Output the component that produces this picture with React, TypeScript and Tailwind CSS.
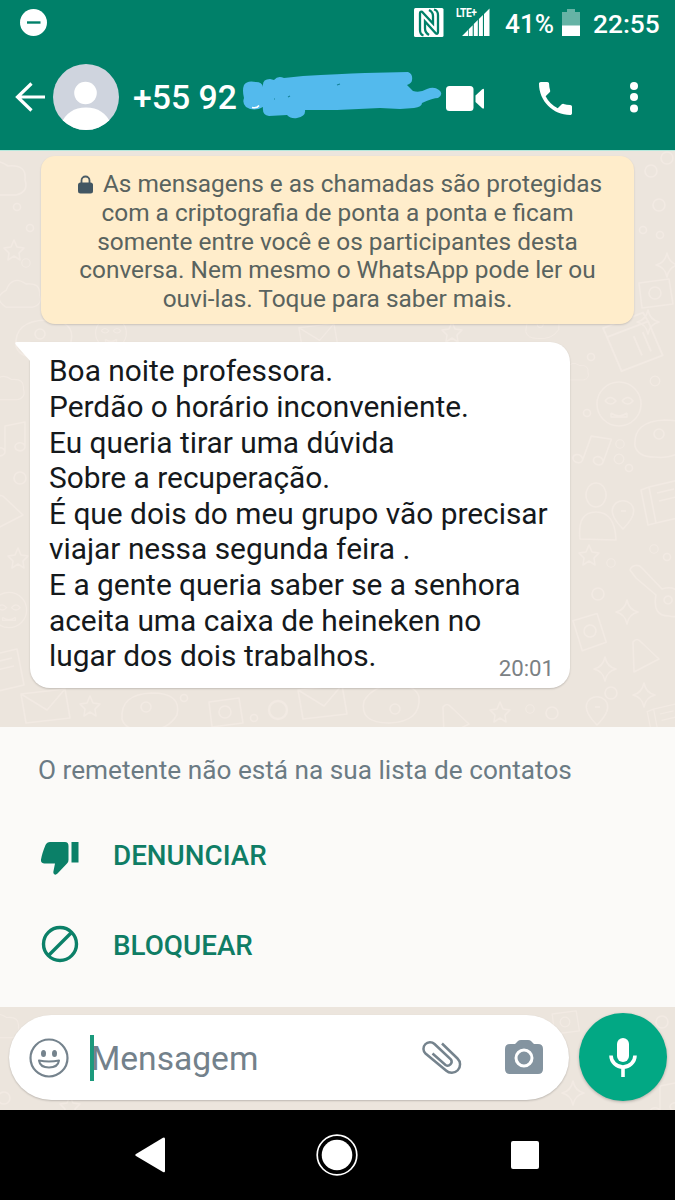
import React from 'react';

interface Doodle {
  shape: keyof typeof shapes;
  x: number;
  y: number;
  scale?: number;
  rotate?: number;
}

// Line drawings for the chat wallpaper, each centred on 0,0
const shapes = {
  dot: <circle r="3.5" />,
  ring: <circle r="6" />,
  face: (
    <>
      <circle r="22" />
      <path d="M-14 -3q5 -7 11 0q-5 6 -11 0M3 -3q6 -7 11 0q-5 6 -11 0M-8 9q8 6 16 0M-8 9v4h16v-4" />
    </>
  ),
  star: <path d="M0 -10l3 7l7 1l-5 5l1 7l-6 -4l-6 4l1 -7l-5 -5l7 -1z" />,
  spark: <path d="M0 -12q2 10 11 12q-9 2 -11 12q-2 -10 -11 -12q9 -2 11 -12z" />,
  book: <path d="M-18 -16l30 -7l7 36l-30 7zM-18 -16l-8 3l7 35l8 -2M-10 -10l17 -4M-8 -2l17 -4" />,
  mail: <path d="M-24 -13l44 -5l5 29l-44 5zM-24 -13l26 16l18 -21" />,
  person: <path d="M-18 26q-3 -27 16 -27q19 0 20 28zM-2 -6a10 12 0 1 1 .1 0" />,
  guitar: <path d="M-26 -26a7 7 0 0 1 12 -2l20 21q16 -5 20 11q2 20 -13 16q-17 0 -13 -21l-20 -17zM12 8a4 4 0 1 1 .1 0" />,
  cloud: <path d="M-20 14q-17 -12 0 -21q8 -20 25 -8q19 -2 17 14q4 12 -9 15z" />,
  triangle: <path d="M-12 -15q4 -5 8 0l18 17l-25 13z" />,
  box: <path d="M-16 -10l30 -4l4 25l-31 4zM-6 0a6 6 0 1 0 12 0a6 6 0 1 0 -12 0" />,
  note: <path d="M-8 12v-26l20 -4v25M-8 12a5 4 0 1 1 -.1 -1M12 7a5 4 0 1 1 -.1 -1" />,
  pin: <path d="M0 14q-17 -17 -7 -26q8 -5 15 1q8 9 -8 25zM-2 -4h5" />,
  oval: <path d="M-27 8q-2 -25 30 -26q30 0 25 22q-11 18 -36 15q-16 0 -19 -11zM-8 -4a5 5 0 1 0 10 0a5 5 0 1 0 -10 0" />,
};

const doodles: Doodle[] = [
  { shape: 'cloud', x: 3, y: 181 },
  { shape: 'dot', x: 17, y: 207 },
  { shape: 'dot', x: 30, y: 228 },
  { shape: 'star', x: 14, y: 250 },
  { shape: 'ring', x: 26, y: 263, scale: 0.7 },
  { shape: 'cloud', x: 22, y: 296, scale: 0.8 },
  { shape: 'oval', x: 43, y: 338 },
  { shape: 'face', x: 111, y: 333, scale: 0.7 },
  { shape: 'mail', x: 318, y: 338, scale: 0.8 },
  { shape: 'star', x: 452, y: 332 },
  { shape: 'oval', x: 542, y: 327, scale: 0.6 },
  { shape: 'ring', x: 651, y: 171 },
  { shape: 'ring', x: 667, y: 158 },
  { shape: 'ring', x: 659, y: 205 },
  { shape: 'dot', x: 643, y: 230 },
  { shape: 'dot', x: 660, y: 235 },
  { shape: 'spark', x: 667, y: 265 },
  { shape: 'box', x: 655, y: 293 },
  { shape: 'spark', x: 648, y: 322 },
  { shape: 'book', x: 633, y: 346, scale: 1.2, rotate: 80 },
  { shape: 'dot', x: 591, y: 357 },
  { shape: 'cloud', x: 577, y: 373, scale: 0.5 },
  { shape: 'ring', x: 655, y: 381, scale: 0.8 },
  { shape: 'face', x: 619, y: 404 },
  { shape: 'oval', x: 662, y: 438 },
  { shape: 'dot', x: 587, y: 413 },
  { shape: 'note', x: 594, y: 452, rotate: 20 },
  { shape: 'ring', x: 620, y: 444, scale: 0.7 },
  { shape: 'ring', x: 619, y: 459, scale: 0.8 },
  { shape: 'dot', x: 629, y: 468 },
  { shape: 'person', x: 598, y: 513 },
  { shape: 'pin', x: 623, y: 515 },
  { shape: 'book', x: 667, y: 503 },
  { shape: 'star', x: 589, y: 555 },
  { shape: 'ring', x: 611, y: 563, scale: 0.7 },
  { shape: 'ring', x: 654, y: 549, scale: 0.7 },
  { shape: 'dot', x: 667, y: 557 },
  { shape: 'guitar', x: 656, y: 596 },
  { shape: 'ring', x: 598, y: 594 },
  { shape: 'spark', x: 627, y: 612 },
  { shape: 'box', x: 590, y: 631, rotate: 80 },
  { shape: 'triangle', x: 645, y: 657 },
  { shape: 'spark', x: 605, y: 669 },
  { shape: 'spark', x: 644, y: 695 },
  { shape: 'star', x: 500, y: 712 },
  { shape: 'ring', x: 530, y: 709, scale: 0.7 },
  { shape: 'ring', x: 552, y: 713 },
  { shape: 'pin', x: 597, y: 711 },
  { shape: 'ring', x: 611, y: 693 },
  { shape: 'book', x: 668, y: 722, scale: 0.8 },
  { shape: 'cloud', x: 8, y: 390, scale: 0.7 },
  { shape: 'note', x: 13, y: 440 },
  { shape: 'ring', x: 20, y: 478 },
  { shape: 'triangle', x: 9, y: 513 },
  { shape: 'star', x: 18, y: 558 },
  { shape: 'face', x: 9, y: 610, scale: 0.8 },
  { shape: 'book', x: 5, y: 672 },
  { shape: 'mail', x: 45, y: 707 },
  { shape: 'star', x: 90, y: 706 },
  { shape: 'oval', x: 149, y: 711 },
  { shape: 'dot', x: 184, y: 698 },
  { shape: 'box', x: 225, y: 712 },
  { shape: 'dot', x: 254, y: 718 },
  { shape: 'ring', x: 278, y: 710, scale: 1.5 },
  { shape: 'mail', x: 322, y: 703 },
  { shape: 'oval', x: 392, y: 705, rotate: 180 },
  { shape: 'triangle', x: 455, y: 722 },
  { shape: 'cloud', x: 3, y: 1028, scale: 0.7 },
  { shape: 'ring', x: 4, y: 1098 },
  { shape: 'star', x: 70, y: 1106 },
  { shape: 'box', x: 565, y: 1022, scale: 0.8 },
  { shape: 'ring', x: 662, y: 1022 },
  { shape: 'spark', x: 573, y: 1093 },
  { shape: 'note', x: 668, y: 1100 },
];

const messageLines = [
  'Boa noite professora.',
  'Perdão o horário inconveniente.',
  'Eu queria tirar uma dúvida',
  'Sobre a recuperação.',
  'É que dois do meu grupo vão precisar',
  'viajar nessa segunda feira .',
  'E a gente queria saber se a senhora',
  'aceita uma caixa de heineken no',
  'lugar dos dois trabalhos.',
];

const Wallpaper: React.FC = () => (
  <svg
    className="absolute inset-0 h-full w-full"
    viewBox="0 0 675 1200"
    fill="none"
    stroke="#f2eae3"
    strokeWidth="1.6"
    strokeLinejoin="round"
  >
    {doodles.map((d, index) => (
      <g key={index} transform={`translate(${d.x} ${d.y}) rotate(${d.rotate ?? 0}) scale(${d.scale ?? 1})`}>
        {shapes[d.shape]}
      </g>
    ))}
  </svg>
);

const StatusBar: React.FC = () => (
  <div className="flex h-12 items-start pt-2 pr-[15px] pl-5 text-white">
    <svg className="mt-px h-[27px] w-[27px]" viewBox="0 0 27 27">
      <circle cx="13.5" cy="13.5" r="13.5" fill="#fff" />
      <path d="M7 13.5h13.5" stroke="#008069" strokeWidth="2.4" />
    </svg>
    <svg className="ml-auto h-[30px] w-[30px]" viewBox="0 0 30 30">
      <rect width="29.500" height="29" rx="1.5" fill="#fff" />
      <g fill="none" stroke="#008069" strokeWidth="2.3">
        <path d="M9.500 27.500Q6 26.500 6 22V5.500Q6 3 8 3.800L19 15.500V8Q19 4 15 2" />
        <path d="M20 1.500Q24 2.500 24 7v16.500q0 3 -2 2L11 13.500v7q0 4 4 6.500" />
      </g>
    </svg>
    <div className="relative ml-3 h-[29px] w-[34px]">
      <span className="absolute -top-px left-0 origin-left scale-x-[0.82] text-[12.5px] leading-[12px] font-bold tracking-[-0.5px]">
        LTE+
      </span>
      <svg className="absolute top-0 left-0 h-[29px] w-[34px]" viewBox="0 0 34 29" fill="#fff">
        <path d="M6 28l6 -6v6zM12.700 28v-6.800l4 -4V28zM17.800 28V16l4 -4v16zM22.900 28V11l4 -4v21zM28 28V6L33.500 .5V28z" />
      </svg>
    </div>
    <span className="mt-px ml-[15px] w-[49px] text-[26.2px] leading-[30px] font-medium whitespace-nowrap">41%</span>
    <svg className="mt-px ml-2 h-[27px] w-[18px]" viewBox="0 0 18 27">
      <path d="M5 0h8v3h5v14H0V3h5z" fill="#66b3a5" />
      <path d="M0 16.500h18V27H0z" fill="#fff" />
    </svg>
    <span className="mt-px ml-[13px] w-[67px] text-[26.3px] leading-[30px] font-medium whitespace-nowrap">22:55</span>
  </div>
);

const ChatHeader: React.FC = () => (
  <div className="flex h-[102px] items-center pr-[30px] pb-1 pl-[15px] text-white">
    <svg className="h-[30px] w-[30px]" viewBox="0 0 30 30" fill="none" stroke="#fff" strokeWidth="3.200">
      <path d="M30 15H2.500M16.500 1.500L2.500 15l14 13.500" />
    </svg>
    <svg className="ml-2 h-[66px] w-[66px]" viewBox="0 0 66 66">
      <defs>
        <clipPath id="avatar">
          <circle cx="33" cy="33" r="33" />
        </clipPath>
      </defs>
      <g clipPath="url(#avatar)">
        <rect width="66" height="66" fill="#cfd4de" />
        <circle cx="32.500" cy="29" r="11.300" fill="#fff" />
        <path d="M8 60q7 -16.500 25 -16.500T58 60v10H8z" fill="#fff" />
      </g>
    </svg>
    <span className="ml-[14px] w-[105px] pt-0.5 text-[33.8px] leading-10 font-medium whitespace-nowrap">+55 92</span>
    <svg className="ml-1 h-[50px] w-[201px]" viewBox="242 72 201 50" fill="#53baed">
      <path d="M244 85Q247 80 256 82Q262 82 263 87Q262 79 270 79L274 80Q278 75 284 78L303 76Q340 74 365 73L408 72Q413 74 412 80Q412 83 407 85L413 91Q420 93 427 89Q434 86 439 90Q444 94 438 98Q433 98 422 103Q422 107 414 108L400 109L380 108L337 110L305 110Q306 116 297 118Q291 119 287 115L269 116Q262 115 263 107Q254 112 246 107Q242 103 244 98Q242 90 244 85Z" />
      <path d="M252 107.500q5 1 7 -2" stroke="#fff" strokeWidth="1.500" fill="none" />
      <path d="M274 99h1M288 97l2 -1M337 85l3 -1" stroke="#16849a" strokeWidth="1.200" />
    </svg>
    <svg className="mt-[3px] ml-[3px] h-[26px] w-[39px]" viewBox="0 0 39 26" fill="#fff">
      <rect width="27.500" height="25" rx="3.500" />
      <path d="M29.500 9.500L36 3.500Q38 2 38 4v17.500q0 2 -2 .5l-6.500 -6z" />
    </svg>
    <svg className="mt-[3px] ml-[54px] h-[33px] w-[33px]" viewBox="3 3 18 18" fill="#fff">
      <path d="M6.620 10.790c1.440 2.830 3.760 5.140 6.590 6.590l2.200-2.200c.27-.27.67-.36 1.020-.24 1.120.37 2.330.57 3.570.57.550 0 1 .45 1 1V20c0 .55-.45 1-1 1-9.390 0-17-7.610-17-17 0-.55.450-1 1-1h3.500c.55 0 1 .45 1 1 0 1.250.2 2.450.57 3.570.11.350.03.740-.25 1.020l-2.200 2.200z" />
    </svg>
    <svg className="ml-auto h-8 w-[22px]" viewBox="0 0 22 32" fill="#fff">
      <circle cx="11" cy="5" r="4" />
      <circle cx="11" cy="16" r="4" />
      <circle cx="11" cy="27.500" r="4" />
    </svg>
  </div>
);

const EncryptionNotice: React.FC = () => (
  <div className="mx-[41px] mt-[5px] h-[168px] rounded-[14px] bg-[#ffedcb] pt-[14px] text-center text-[24.4px] leading-[28.8px] whitespace-nowrap text-[#59635f] shadow-[0_1px_2px_rgba(0,0,0,0.15)]">
    <p className="flex items-center justify-center pl-[5px]">
      <svg className="mr-[10px] h-[19px] w-[15px]" viewBox="0 0 15 19">
        <path d="M3.500 9V5.500a4 4 0 0 1 8 0V9" fill="none" stroke="#4b5c66" strokeWidth="1.800" />
        <rect y="7.500" width="15" height="11" rx="2.500" fill="#425662" />
      </svg>
      As mensagens e as chamadas são protegidas
    </p>
    <p>com a criptografia de ponta a ponta e ficam</p>
    <p>somente entre você e os participantes desta</p>
    <p>conversa. Nem mesmo o WhatsApp pode ler ou</p>
    <p>ouvi-las. Toque para saber mais.</p>
  </div>
);

const MessageBubble: React.FC = () => (
  <div className="relative mt-[18px] ml-[30px] h-[346px] w-[540px] rounded-[20px] rounded-tl-none bg-white pt-[11.4px] pl-[19px] shadow-[0_1px_2px_rgba(0,0,0,0.18)]">
    <svg className="absolute top-0 -left-[15px] h-5 w-4" viewBox="0 0 16 20" fill="#fff">
      <path d="M2 0h14v20L1 3Q-1 0 2 0z" />
    </svg>
    {messageLines.map((line) => (
      <p key={line} className="text-[29.87px] leading-[35.6px] whitespace-nowrap text-[#15191c]">
        {line}
      </p>
    ))}
    <span className="absolute right-4 bottom-[7px] text-[22.2px] leading-[26px] text-[#7b8184]">20:01</span>
  </div>
);

const UnknownSenderPanel: React.FC = () => (
  <div className="mt-[39px] h-[280px] bg-[#fbfaf8] pt-[27px] pl-[38px] text-[#0f7d65]">
    <p className="text-[26.2px] leading-8 whitespace-nowrap text-[#6b7b84]">
      O remetente não está na sua lista de contatos
    </p>
    <button className="mt-[53px] flex h-[34px] items-center text-[27.8px] leading-[34px] font-medium">
      <svg className="mt-[5px] mr-[34px] ml-[3px] h-[33px] w-[38px]" viewBox="0 0 38 33" fill="#0b8068">
        <path d="M9 0h15q3.500 0 3.500 4v14q0 2 -1.500 3.500L16.500 31.500q-2 2 -3.500 .5q-1 -1 -.5 -3l1.500 -7.500H3.500q-4 0 -3.500 -4q1 -6 4.500 -14.500Q6 0 9 0zM30.500 0H37.500v20.500h-7z" />
      </svg>
      DENUNCIAR
    </button>
    <button className="mt-[56px] flex h-[34px] items-center text-[27.8px] leading-[34px] font-medium">
      <svg className="mr-[34px] mb-[5px] ml-[3px] h-[38px] w-[38px]" viewBox="0 0 38 38" fill="none" stroke="#0b8068" strokeWidth="3.400">
        <circle cx="19" cy="19" r="16.500" />
        <path d="M7.500 30.500l23 -23" />
      </svg>
      BLOQUEAR
    </button>
  </div>
);

const Composer: React.FC = () => (
  <div className="flex h-[103px] items-start pt-[6px] pl-[9px]">
    <div className="mt-0.5 flex h-[85px] w-[560px] items-center rounded-full bg-white pl-5 shadow-[0_1px_2px_rgba(0,0,0,0.2)]">
      <svg className="h-10 w-10" viewBox="0 0 40 40" fill="none" stroke="#75838d" strokeWidth="2.200">
        <circle cx="20" cy="20" r="18.500" />
        <ellipse cx="14.500" cy="15.500" rx="2.500" ry="3.500" fill="#75838d" stroke="none" />
        <ellipse cx="25.500" cy="15.500" rx="2.500" ry="3.500" fill="#75838d" stroke="none" />
        <path d="M10 22.500q10 2 20 0q-1 7 -10 7t-10 -7z" strokeWidth="2" strokeLinejoin="round" />
      </svg>
      <div className="ml-[21px] h-[46px] w-[4px] bg-[#1b9a7c]" />
      <span className="-ml-[3px] pt-0.5 text-[33.6px] leading-[44px] text-[#73818b]">Mensagem</span>
      <svg className="mr-[43px] ml-auto h-9 w-10" viewBox="0 0 40 36" fill="none" stroke="#75838d" strokeWidth="2.500">
        <path d="M20 3.500L35.500 18.500a8.300 8.300 0 0 1 -11.500 12L3.500 13.500a6.200 6.200 0 0 1 9 -9.500L29 19.500a4 4 0 0 1 -5.500 5.500L10.500 13.500" />
      </svg>
      <svg className="mr-[26px] h-[35px] w-[38px]" viewBox="0 0 38 35">
        <path d="M5 4h5l3 -3q1 -1 3 -1h7q2 0 3 1l3 3h4q5 0 5 5v20q0 5 -5 5H5q-5 0 -5 -5V9q0 -5 5 -5z" fill="#8494a0" />
        <circle cx="19" cy="18" r="8" fill="#8494a0" stroke="#fff" strokeWidth="3" />
      </svg>
    </div>
    <div className="ml-[10px] flex h-[88px] w-[88px] items-center justify-center rounded-full bg-[#02a884] shadow-[0_1px_3px_rgba(0,0,0,0.25)]">
      <svg className="h-[39px] w-7" viewBox="0 0 28 39">
        <rect x="8" width="12" height="24" rx="6" fill="#fff" />
        <path d="M2 17.500a12 11.500 0 0 0 24 0M14 28.500V39" fill="none" stroke="#fff" strokeWidth="3.600" />
      </svg>
    </div>
  </div>
);

const NavigationBar: React.FC = () => (
  <div className="flex h-[90px] items-center bg-black pl-[135px]">
    <svg className="h-9 w-[30px]" viewBox="0 0 30 36" fill="#fff">
      <path d="M1 17L28 .8q2 -1 2 1.200v32q0 2 -2 1L1 19q-1.500 -1 0 -2z" />
    </svg>
    <svg className="ml-[151px] h-[42px] w-[42px]" viewBox="0 0 42 42">
      <circle cx="21" cy="21" r="19.800" fill="none" stroke="#fff" strokeWidth="1.700" />
      <circle cx="21" cy="21" r="15.300" fill="#fff" />
    </svg>
    <div className="ml-[153px] h-7 w-7 rounded-[2px] bg-white" />
  </div>
);

const App: React.FC = () => {
  return (
    <div className="relative h-[1200px] w-[675px] overflow-hidden bg-[#ece5dd] font-['Roboto',sans-serif]">
      <Wallpaper />
      <div className="relative flex flex-col">
        <header className="bg-[#008069]">
          <StatusBar />
          <ChatHeader />
        </header>
        <main className="h-[857px] border-t border-[#b5e8dc]">
          <EncryptionNotice />
          <MessageBubble />
          <UnknownSenderPanel />
        </main>
        <Composer />
        <NavigationBar />
      </div>
    </div>
  );
};

export default App;
